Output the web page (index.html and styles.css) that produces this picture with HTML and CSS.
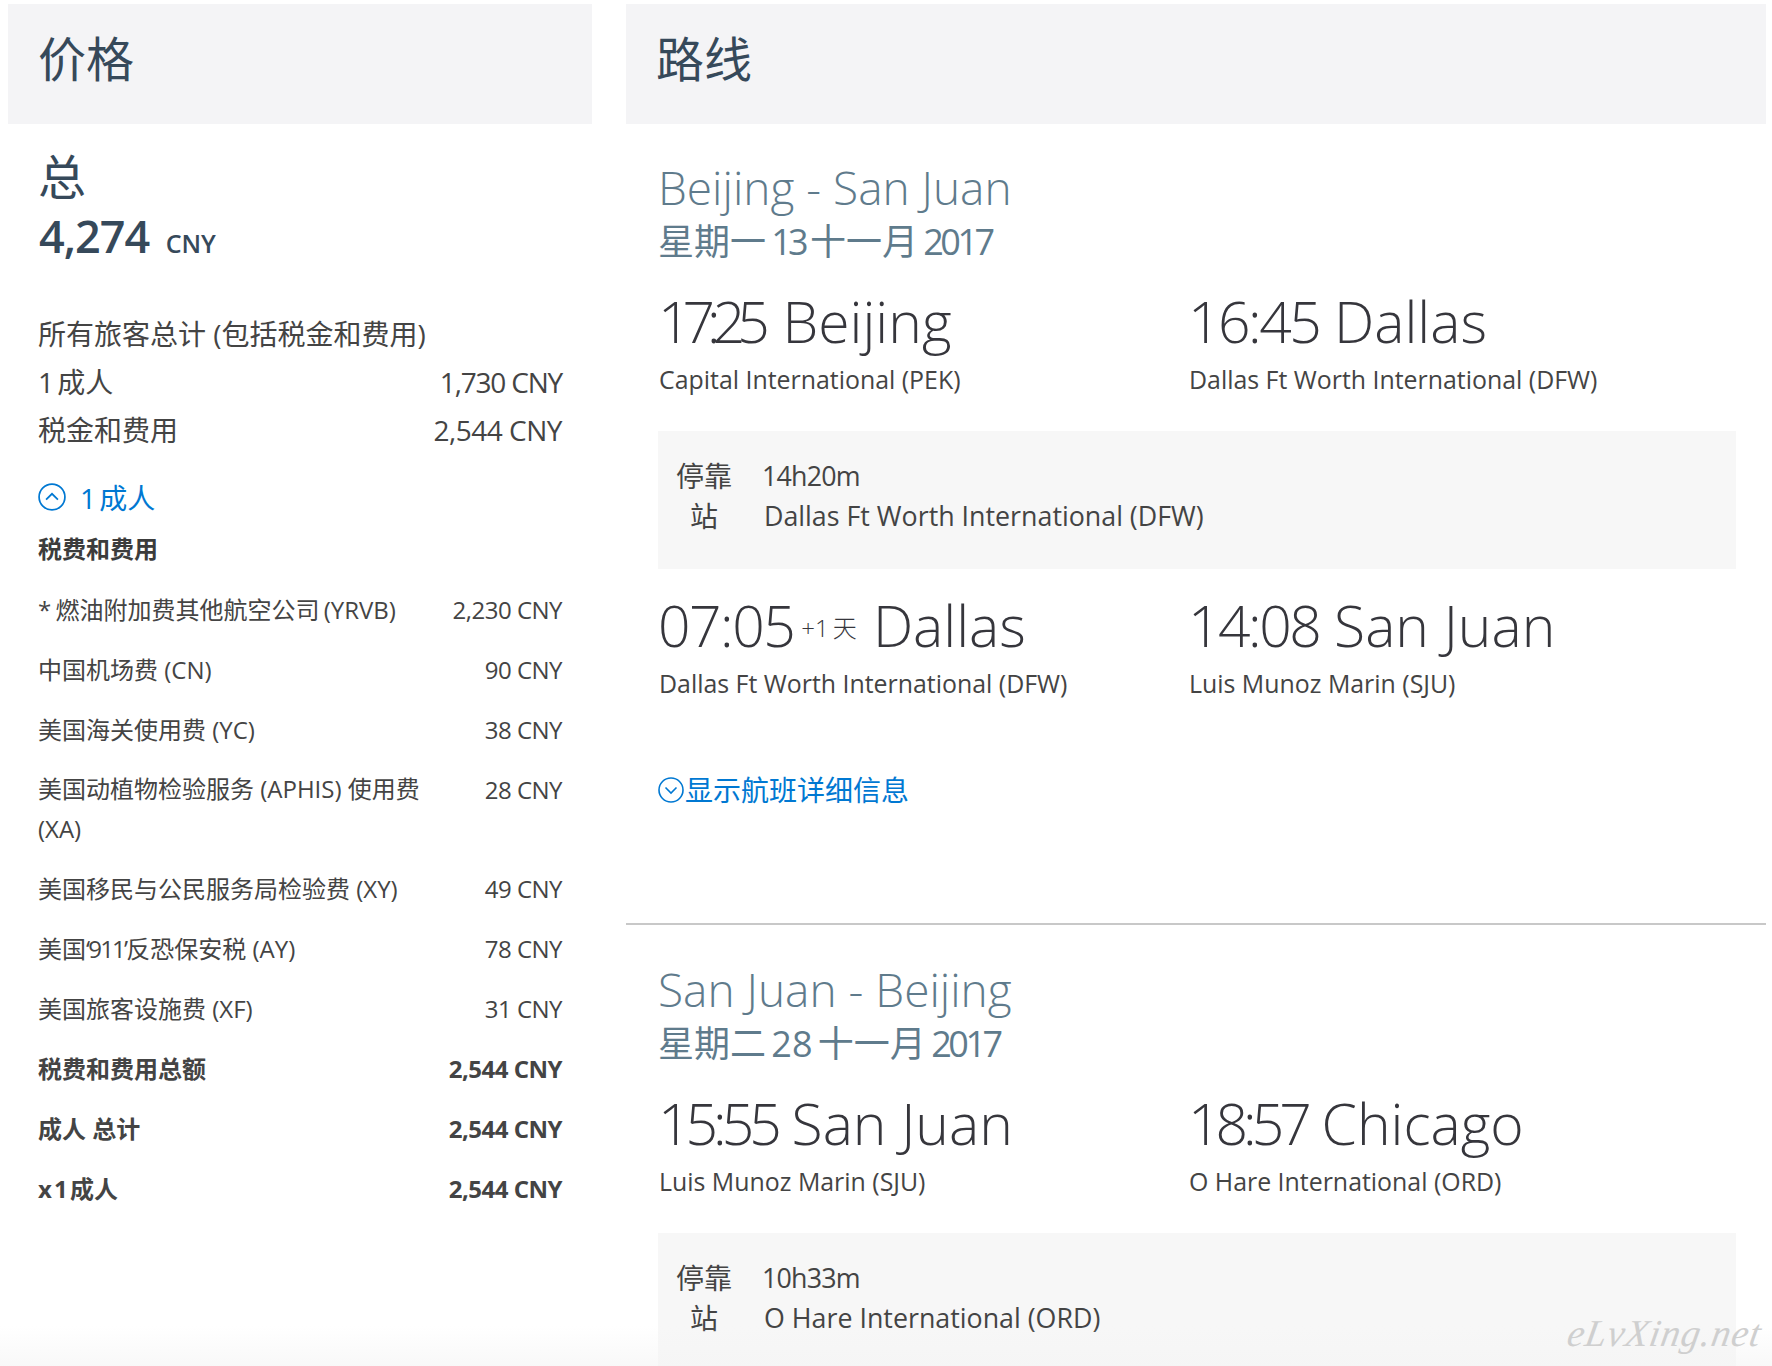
FILE: index.html
```html
<!DOCTYPE html>
<html lang="zh-CN">
<head>
<meta charset="utf-8">
<title>价格 路线</title>
<link rel="stylesheet" href="styles.css">
</head>
<body>
<main class="page">
  <section class="price">
    <h1 class="head">价格</h1>
    <div class="total-label">总</div>
    <div class="total"><b>4,274</b> <span>CNY</span></div>
    <p class="all">所有旅客总计 (包括税金和费用)</p>
    <div class="sum"><span class="tight-word">1 成人</span><span class="amt narrow">1,730 CNY</span></div>
    <div class="sum"><span>税金和费用</span><span class="amt">2,544 CNY</span></div>
    <a class="toggle"><svg class="ic" viewBox="0 0 26 26"><circle cx="13" cy="13" r="12"/><path d="M7.5 15.5 13 10l5.5 5.5"/></svg><span class="tight-word">1 成人</span></a>
    <h2 class="fees">税费和费用</h2>
    <div class="rows">
      <div class="row"><span class="snug-word">* 燃油附加费其他航空公司 (YRVB)</span><span class="amt">2,230 CNY</span></div>
      <div class="row"><span>中国机场费 (CN)</span><span class="amt">90 CNY</span></div>
      <div class="row"><span>美国海关使用费 (YC)</span><span class="amt">38 CNY</span></div>
      <div class="row"><span class="wrap">美国动植物检验服务 (APHIS) 使用费 (XA)</span><span class="amt">28 CNY</span></div>
      <div class="row"><span>美国移民与公民服务局检验费 (XY)</span><span class="amt">49 CNY</span></div>
      <div class="row"><span>美国<span class="quoted">‘911’</span>反恐保安税 (AY)</span><span class="amt">78 CNY</span></div>
      <div class="row"><span>美国旅客设施费 (XF)</span><span class="amt">31 CNY</span></div>
      <div class="row strong"><span>税费和费用总额</span><span class="amt">2,544 CNY</span></div>
      <div class="row strong"><span>成人 总计</span><span class="amt">2,544 CNY</span></div>
      <div class="row strong"><span class="tight-word">x 1 成人</span><span class="amt">2,544 CNY</span></div>
    </div>
  </section>
  <section class="route">
    <h1 class="head">路线</h1>
    <div class="trip first">
      <h2 class="city">Beijing - San Juan</h2>
      <div class="date">星期一 <span class="num-t">13</span> 十一月 <span class="num">2017</span></div>
      <div class="leg">
        <div><div class="time wide-gap"><span class="hm-xt">17:25</span> Beijing</div><div class="port">Capital International (PEK)</div></div>
        <div><div class="time"><span class="hm">16:45</span> Dallas</div><div class="port">Dallas Ft Worth International (DFW)</div></div>
      </div>
      <div class="stop">
        <div class="stop-label">停靠<br>站</div>
        <div class="stop-info"><div class="dur">14h20m</div><div>Dallas Ft Worth International (DFW)</div></div>
      </div>
      <div class="leg second">
        <div><div class="time"><span class="hm-w">07:05</span><small>+1 天</small>Dallas</div><div class="port">Dallas Ft Worth International (DFW)</div></div>
        <div><div class="time"><span class="hm">14:08</span> San Juan</div><div class="port">Luis Munoz Marin (SJU)</div></div>
      </div>
      <a class="details"><svg class="ic" viewBox="0 0 26 26"><circle cx="13" cy="13" r="12"/><path d="M7.5 10.5 13 16l5.5-5.5"/></svg><span>显示航班详细信息</span></a>
    </div>
    <hr class="rule">
    <div class="trip last">
      <h2 class="city">San Juan - Beijing</h2>
      <div class="date">星期二 28 十一月 <span class="num">2017</span></div>
      <div class="leg">
        <div><div class="time"><span class="hm-t">15:55</span> San Juan</div><div class="port">Luis Munoz Marin (SJU)</div></div>
        <div><div class="time"><span class="hm-t">18:57</span> Chicago</div><div class="port">O Hare International (ORD)</div></div>
      </div>
      <div class="stop tall">
        <div class="stop-label">停靠<br>站</div>
        <div class="stop-info"><div class="dur">10h33m</div><div>O Hare International (ORD)</div></div>
      </div>
    </div>
  </section>
  <div class="fade"></div>
  <div class="mark">eLvXing.net</div>
</main>
</body>
</html>
```
FILE: styles.css
```css
html, body { margin: 0; padding: 0; background: #fff; }
.page {
  position: relative;
  display: flex;
  width: 1772px;
  height: 1366px;
  overflow: hidden;
  font-family: "Open Sans", "Noto Sans CJK SC", sans-serif;
  color: #36495a;
}
.price { width: 584px; margin-left: 8px; }
.route { width: 1140px; margin-left: 34px; }
.head {
  margin: 4px 0 0;
  height: 120px;
  padding-left: 30px;
  background: #f4f4f6;
  font-size: 48px;
  font-weight: 400;
  line-height: 110px;
  color: #36495a;
}
.total-label { margin: 24px 0 0 30px; font-size: 48px; line-height: 58px; }
.total { margin-left: 31px; line-height: 60px; font-size: 25px; font-weight: 600; }
.total b { font-size: 45px; font-weight: 600; letter-spacing: -1px; margin-right: 10px; }
.all { margin: 37px 0 0 30px; font-size: 28px; line-height: 48px; color: #444; font-weight: 400; }
.sum {
  display: flex;
  justify-content: space-between;
  margin: 0 30px;
  font-size: 28px;
  line-height: 48px;
  font-weight: 400;
  color: #444;
}
.tight-word { word-spacing: -4px; }
.snug-word { word-spacing: -2px; }
.amt { letter-spacing: -0.5px; }
.narrow { letter-spacing: -1.2px; }
.quoted { letter-spacing: -1.8px; }
.toggle { display: flex; align-items: center; gap: 14px; margin: 21px 0 0 30px; height: 44px; font-size: 28px; color: #0078d2; }
.ic { width: 28px; height: 28px; fill: none; stroke: #0078d2; stroke-width: 1.6; flex: none; }
.fees { margin: 10px 0 0 30px; font-size: 24px; line-height: 40px; font-weight: 700; color: #3c3c3c; }
.rows { margin: 10px 30px 0; }
.row {
  display: flex;
  justify-content: space-between;
  padding: 10px 0 9px;
  font-size: 24px;
  line-height: 41px;
  font-weight: 400;
  color: #444;
}
.wrap { width: 390px; line-height: 40px; }
.row.strong { font-weight: 700; }
.trip { padding: 0 30px 0 32px; }
.trip.first { height: 799px; padding-top: 33px; box-sizing: border-box; }
.trip.last { padding-top: 34px; }
.city { margin: 0; font-size: 46px; line-height: 61px; font-weight: 300; color: #5f7b8c; }
.date { font-size: 36px; line-height: 47px; color: #5f7b8c; font-weight: 400; word-spacing: -4px; }
.num { letter-spacing: -3.5px; }
.num-t { letter-spacing: -4px; }
.leg { display: grid; grid-template-columns: 530px 1fr; margin-top: 21px; }
.time { font-size: 57px; line-height: 70px; font-weight: 300; color: #36363c; white-space: nowrap; }
.wide-gap { word-spacing: 6px; }
.hm { letter-spacing: -2.5px; }
.hm-w { letter-spacing: -1.5px; }
.hm-t { letter-spacing: -5px; }
.hm-xt { letter-spacing: -8px; }
.time small { font-size: 24px; line-height: 0; margin: 0 16px 0 7px; vertical-align: 10px; word-spacing: -2px; }
.port { margin: 5px 0 0 1px; font-size: 24.9px; line-height: 36px; color: #444; font-weight: 400; }
.stop {
  display: flex;
  height: 138px;
  margin-top: 34px;
  padding: 25px 0 0 18px;
  box-sizing: border-box;
  background: #f7f7f7;
  font-size: 28px;
  line-height: 40px;
  color: #444;
  font-weight: 400;
}
.stop-label { width: 56px; text-align: center; margin-right: 32px; }
.stop-info { font-size: 26.8px; }
.dur { margin-left: -2px; letter-spacing: -0.8px; }
.second { margin-top: 21px; }
.details { display: flex; align-items: center; gap: 1px; margin-top: 67px; font-size: 28px; line-height: 44px; color: #0078d2; }
.details .ic { width: 26px; height: 26px; }
.rule { margin: 0; border: 0; height: 2px; background: #c8c8c8; }
.tall { height: 180px; }
.fade {
  position: absolute;
  left: 0;
  right: 0;
  bottom: 0;
  height: 40px;
  background: linear-gradient(rgba(255,255,255,0), #f4f4f4);
  opacity: 0.6;
}
.mark {
  position: absolute;
  right: 10px;
  bottom: 11px;
  font-family: "Liberation Serif", serif;
  font-style: italic;
  font-size: 38px;
  letter-spacing: 1px;
  color: #cfcfcf;
  transform: skewX(-10deg);
}
```
